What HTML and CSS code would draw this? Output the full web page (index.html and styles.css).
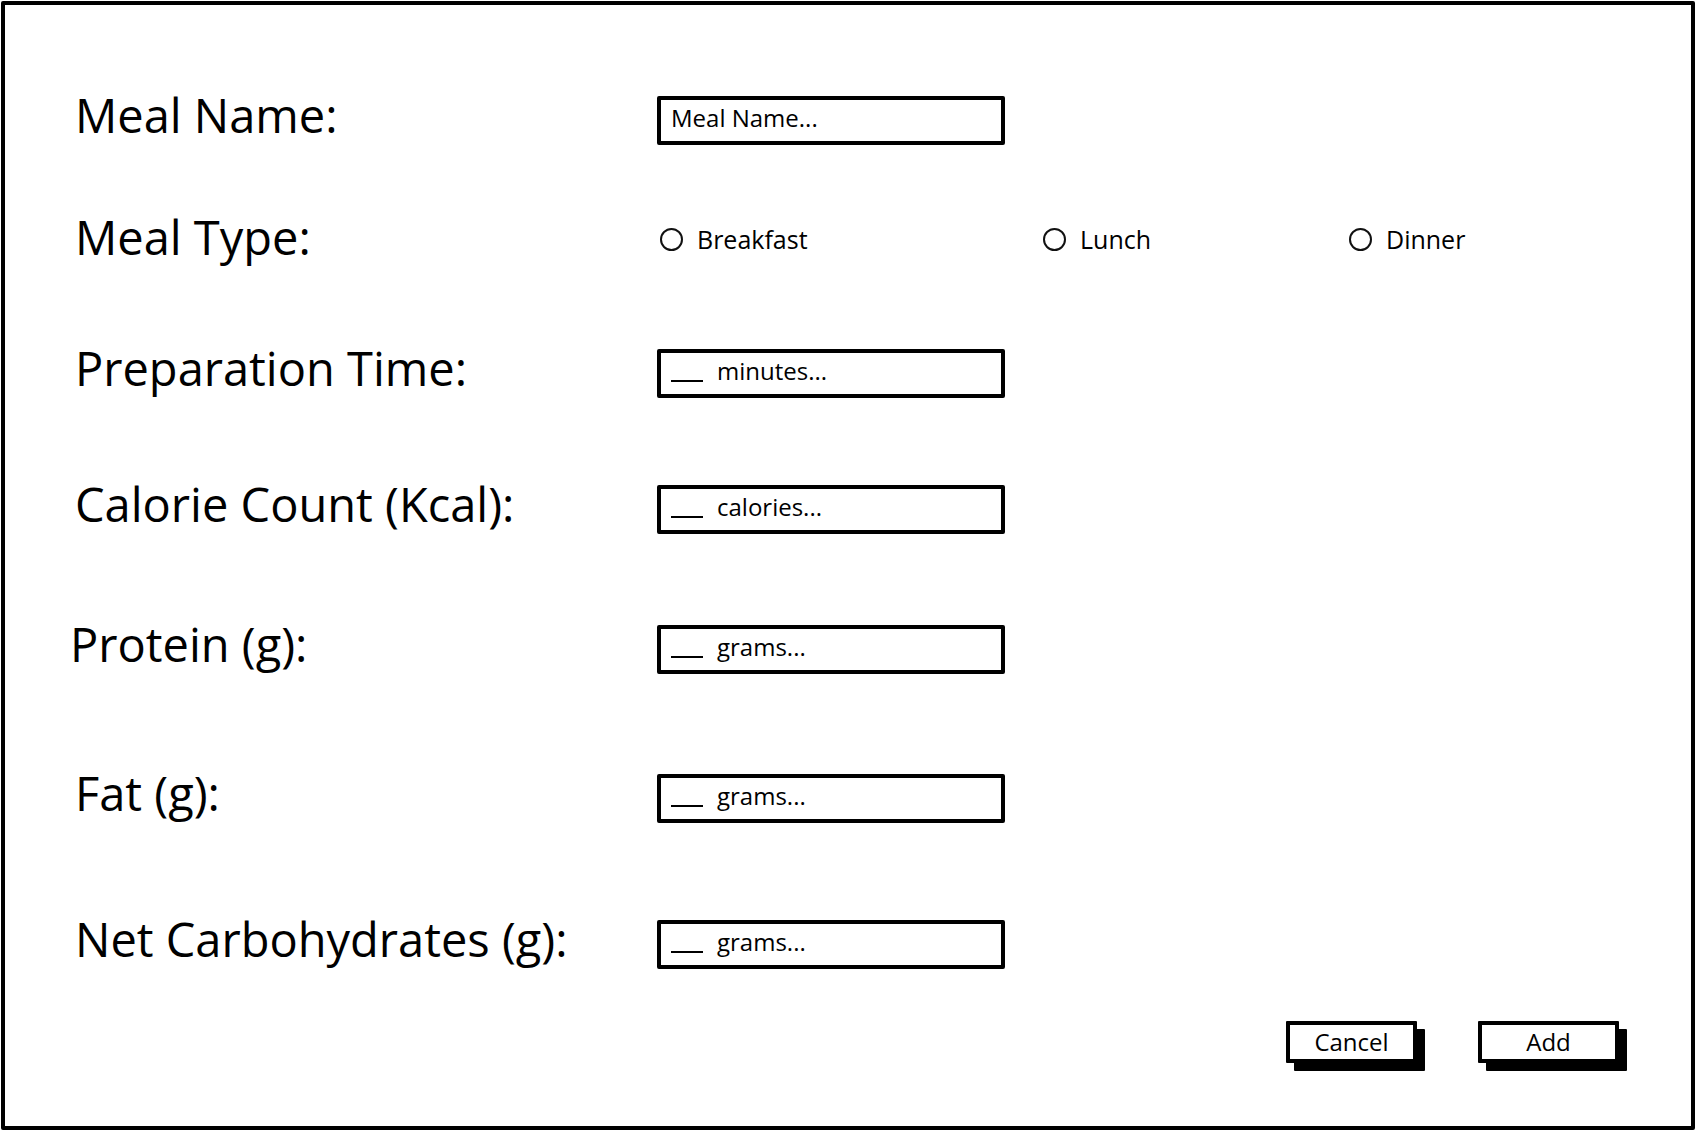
FILE: index.html
```html
<!DOCTYPE html>
<html lang="en">
<head>
<meta charset="utf-8">
<title>Add Meal</title>
<link rel="stylesheet" href="styles.css">
</head>
<body>
<div class="frame">
  <div class="row">
    <div class="label">Meal Name:</div>
    <div class="field"><span class="ph">Meal Name...</span></div>
  </div>
  <div class="row row-type">
    <div class="label label-type">Meal Type:</div>
    <div class="radios">
      <label class="radio col-a"><span class="dot"></span>Breakfast</label>
      <label class="radio col-b"><span class="dot"></span>Lunch</label>
      <label class="radio"><span class="dot"></span>Dinner</label>
    </div>
  </div>
  <div class="row row-prep">
    <div class="label">Preparation Time:</div>
    <div class="field"><span class="dash"></span><span class="ph">minutes...</span></div>
  </div>
  <div class="row row-cal">
    <div class="label">Calorie Count (Kcal):</div>
    <div class="field"><span class="dash"></span><span class="ph">calories...</span></div>
  </div>
  <div class="row row-pro">
    <div class="label label-shift">Protein (g):</div>
    <div class="field"><span class="dash"></span><span class="ph">grams...</span></div>
  </div>
  <div class="row row-fat">
    <div class="label">Fat (g):</div>
    <div class="field"><span class="dash"></span><span class="ph">grams...</span></div>
  </div>
  <div class="row row-carb">
    <div class="label">Net Carbohydrates (g):</div>
    <div class="field"><span class="dash"></span><span class="ph">grams...</span></div>
  </div>
  <div class="actions">
    <button class="btn btn-cancel" type="button">Cancel</button>
    <button class="btn btn-add" type="button">Add</button>
  </div>
</div>
</body>
</html>
```
FILE: styles.css
```css
html, body {
  margin: 0;
  padding: 0;
  background: #fff;
  overflow: hidden;
}

body {
  font-family: "Open Sans", "Liberation Sans", sans-serif;
  color: #000;
}

.frame {
  box-sizing: border-box;
  width: 1694px;
  height: 1129px;
  margin: 1px 0 0 1px;
  border: 4px solid #000;
  border-radius: 2px;
  padding: 91px 0 0 70px;
}

.row {
  display: flex;
  align-items: center;
  height: 49px;
}

.row-type { margin-top: 70px; }
.row-prep { margin-top: 85px; }
.row-cal  { margin-top: 87px; }
.row-pro  { margin-top: 91px; }
.row-fat  { margin-top: 100px; }
.row-carb { margin-top: 97px; }

.label {
  flex: none;
  box-sizing: border-box;
  width: 582px;
  padding-bottom: 10px;
  font-size: 47px;
  line-height: 1;
  white-space: nowrap;
}

.label-type {
  padding-bottom: 5px;
}

.label-shift {
  margin-left: -5px;
  width: 587px;
}

.field {
  box-sizing: border-box;
  flex: none;
  width: 348px;
  height: 49px;
  border: 4px solid #000;
  border-radius: 2px;
  display: flex;
  align-items: center;
  padding: 0 0 5px 10px;
  font-size: 24px;
  line-height: 1;
}

.dash {
  flex: none;
  width: 32px;
  height: 2px;
  background: #000;
  margin-top: 19px;
  margin-right: 14px;
}

.radios {
  display: flex;
  align-items: center;
  padding-left: 3px;
  font-size: 25px;
  line-height: 1;
}

.radio {
  display: flex;
  align-items: center;
  gap: 14px;
}

.col-a { width: 383px; }
.col-b { width: 306px; }

.dot {
  box-sizing: border-box;
  width: 23px;
  height: 23px;
  border: 2px solid #111;
  border-radius: 50%;
}

.actions {
  display: flex;
  justify-content: flex-end;
  gap: 61px;
  margin-top: 52px;
  padding-right: 72px;
}

.btn {
  box-sizing: border-box;
  height: 42px;
  padding: 0;
  border: 4px solid #000;
  border-radius: 1px;
  background: #fff;
  color: #000;
  font-family: "Open Sans", "Liberation Sans", sans-serif;
  font-size: 24px;
  line-height: 1;
  box-shadow: 8px 8px 0 #000;
}

.btn-cancel { width: 131px; }
.btn-add { width: 141px; }
```
